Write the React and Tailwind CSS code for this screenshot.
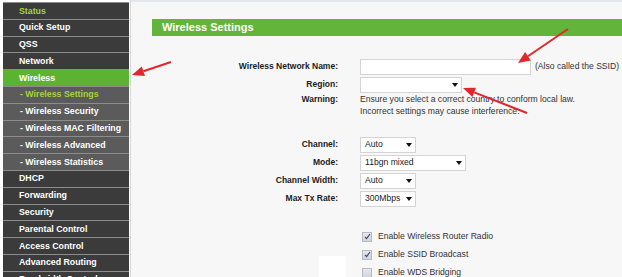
import React from "react";

const menu = [
  { label: "Status", kind: "top", active: true },
  { label: "Quick Setup", kind: "top" },
  { label: "QSS", kind: "top" },
  { label: "Network", kind: "top" },
  { label: "Wireless", kind: "selected" },
  { label: "- Wireless Settings", kind: "sub", active: true },
  { label: "- Wireless Security", kind: "sub" },
  { label: "- Wireless MAC Filtering", kind: "sub" },
  { label: "- Wireless Advanced", kind: "sub" },
  { label: "- Wireless Statistics", kind: "sub" },
  { label: "DHCP", kind: "top" },
  { label: "Forwarding", kind: "top" },
  { label: "Security", kind: "top" },
  { label: "Parental Control", kind: "top" },
  { label: "Access Control", kind: "top" },
  { label: "Advanced Routing", kind: "top" },
  { label: "Bandwidth Control", kind: "top" },
];

function MenuItem({ item }) {
  const bg =
    item.kind === "selected"
      ? "bg-[#5cb331]"
      : item.kind === "sub"
      ? "bg-[#5b5b5b]"
      : "bg-[#3b3b3b]";
  const color = item.active ? "text-[#a6d43a]" : "text-white";
  const pad = item.kind === "sub" ? "pl-[17px]" : "pl-[16px]";
  return (
    <div
      className={`flex h-[16.8px] shrink-0 items-center border-b border-[#8c8c8c] ${bg} ${pad} ${color} text-[8.8px] font-bold leading-none`}
    >
      {item.label}
    </div>
  );
}

function Select({ width, value }) {
  return (
    <div
      className={`flex h-[16px] items-center justify-between border border-[#d4d4d4] bg-white pl-[4px] pr-[3px] text-[8.6px] text-[#222] ${width}`}
    >
      <span>{value}</span>
      <svg width="6" height="4" viewBox="0 0 6 4" className="shrink-0">
        <path d="M0 0h6L3 4z" fill="#111" />
      </svg>
    </div>
  );
}

function Label({ children }) {
  return (
    <div className="w-[186px] text-right text-[8.5px] font-bold text-[#222]">
      {children}
    </div>
  );
}

function Row({ label, children, className = "" }) {
  return (
    <div className={`flex items-center gap-[22px] ${className}`}>
      <Label>{label}</Label>
      {children}
    </div>
  );
}

function Checkbox({ checked, label }) {
  return (
    <div className="flex h-[18px] items-center pl-[210px]">
      <div className="flex h-[10px] w-[10px] items-center justify-center border border-[#b8b8c0] bg-gradient-to-b from-[#e8e8ee] to-[#d2d4dc]">
        {checked && (
          <svg width="7" height="7" viewBox="0 0 7 7">
            <path d="M1 3.8l1.6 1.8L6 1" fill="none" stroke="#3a4a7a" strokeWidth="1.2" />
          </svg>
        )}
      </div>
      <span className="ml-[6px] text-[8.6px] text-[#333]">{label}</span>
    </div>
  );
}

function Arrows() {
  const arrows = [
    { x1: 171, y1: 62, x2: 132, y2: 75 },
    { x1: 568, y1: 29, x2: 518, y2: 63 },
    { x1: 527, y1: 113, x2: 463, y2: 88 },
  ];
  return (
    <svg className="pointer-events-none absolute left-0 top-0" width="622" height="277">
      {arrows.map((a, i) => {
        const dx = a.x2 - a.x1;
        const dy = a.y2 - a.y1;
        const len = Math.hypot(dx, dy);
        const ux = dx / len;
        const uy = dy / len;
        const bx = a.x2 - ux * 12;
        const by = a.y2 - uy * 12;
        const px = -uy * 5;
        const py = ux * 5;
        return (
          <g key={i}>
            <line x1={a.x1} y1={a.y1} x2={bx} y2={by} stroke="#e0282c" strokeWidth="2" />
            <polygon
              points={`${a.x2},${a.y2} ${bx + px},${by + py} ${bx - px},${by - py}`}
              fill="#e0282c"
            />
          </g>
        );
      })}
    </svg>
  );
}

export default function App() {
  return (
    <div className="relative flex h-[277px] w-[622px] overflow-hidden bg-[#f7f7f7] font-['Liberation_Sans',Arial,sans-serif]">
      <div className="flex w-[130px] shrink-0 flex-col bg-white pl-[3px] pr-[1px] pt-[2px]">
        <div className="flex flex-col border-t border-[#8c8c8c]">
          {menu.map((item) => (
            <MenuItem key={item.label} item={item} />
          ))}
        </div>
      </div>
      <div className="w-[1px] shrink-0 bg-[#d6d6d6]" />

      <div className="flex flex-1 flex-col border-t-[2px] border-[#e4e8ec] pl-[21px] pt-[17px]">
        <div className="flex h-[18px] items-center bg-[#62b43a] pl-[10px] text-[11px] font-bold text-white">
          Wireless Settings
        </div>
        <div className="mt-[16px] h-[2px] bg-[#5d8f75]" />

        <div className="mt-[7px] flex flex-col">
          <Row label="Wireless Network Name:">
            <div className="h-[16px] w-[171px] border border-[#d4d4d4] bg-white" />
            <span className="-ml-[18px] text-[8.6px] text-[#333]">(Also called the SSID)</span>
          </Row>
          <Row label="Region:" className="mt-[2px]">
            <Select width="w-[102px]" value="" />
          </Row>
          <div className="mt-[0px] flex items-start gap-[22px]">
            <Label>Warning:</Label>
            <div className="text-[8.6px] leading-[12px] text-[#333]">
              Ensure you select a correct country to conform local law.
              <br />
              Incorrect settings may cause interference.
            </div>
          </div>

          <div className="mt-[20px] flex flex-col gap-[2px]">
            <Row label="Channel:">
              <Select width="w-[56px]" value="Auto" />
            </Row>
            <Row label="Mode:">
              <Select width="w-[106px]" value="11bgn mixed" />
            </Row>
            <Row label="Channel Width:">
              <Select width="w-[56px]" value="Auto" />
            </Row>
            <Row label="Max Tx Rate:">
              <Select width="w-[56px]" value="300Mbps" />
            </Row>
          </div>

          <div className="relative mt-[21px] flex flex-col">
            <div className="absolute left-[167px] top-[28px] h-[40px] w-[27px] bg-white" />
            <Checkbox checked label="Enable Wireless Router Radio" />
            <Checkbox checked label="Enable SSID Broadcast" />
            <Checkbox label="Enable WDS Bridging" />
          </div>
        </div>
      </div>

      <Arrows />
    </div>
  );
}
